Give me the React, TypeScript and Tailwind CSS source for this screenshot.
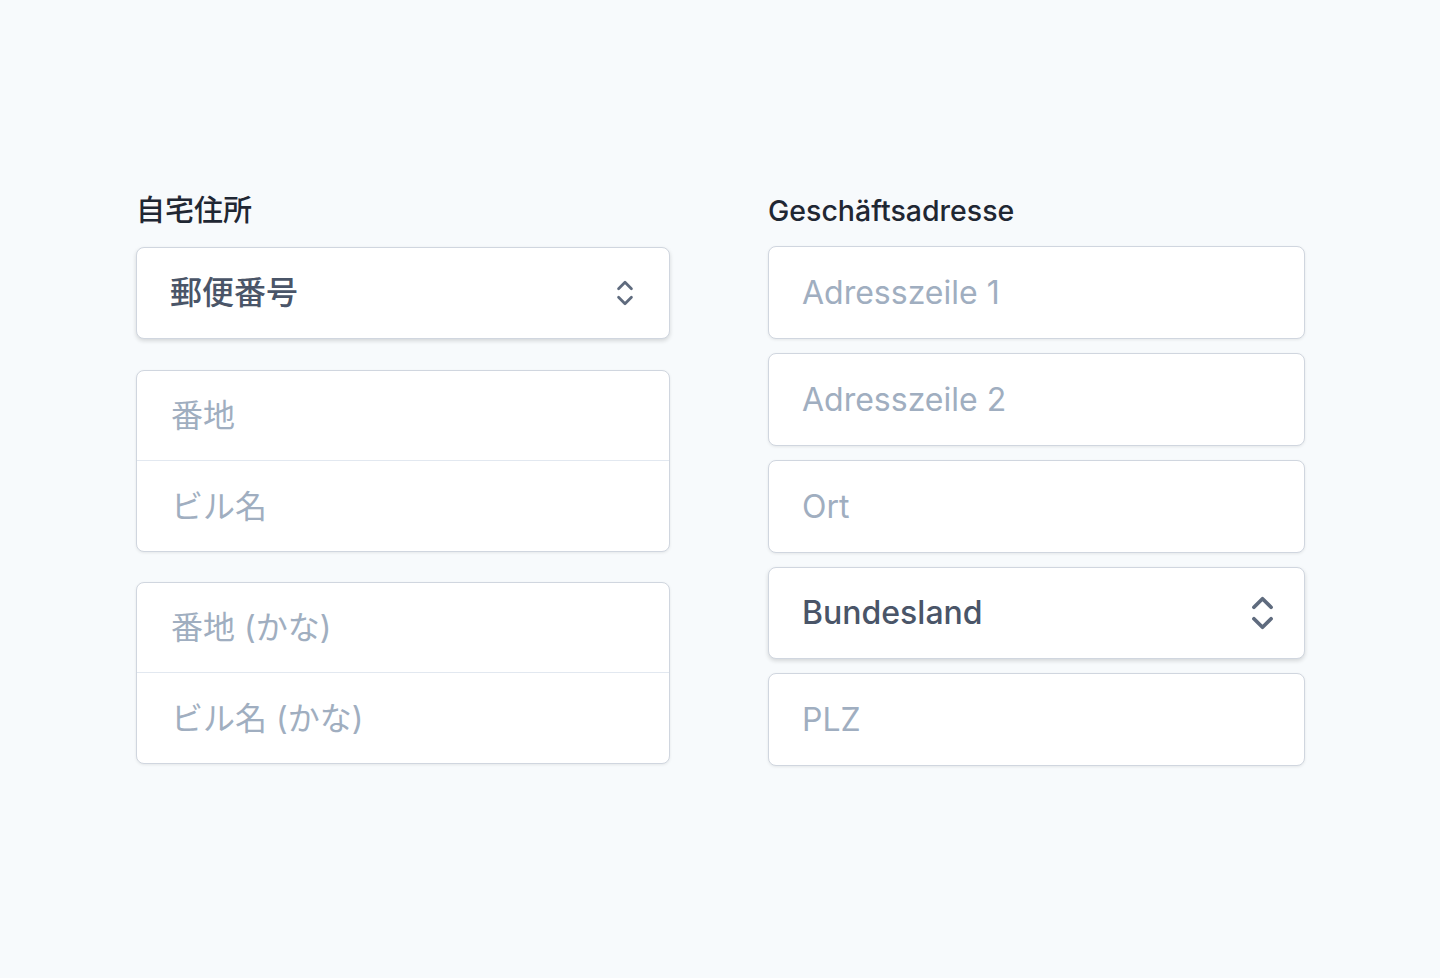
import { useState } from "react";

const font = {
  fontFamily: '"Inter", "Noto Sans CJK JP", "Noto Sans", sans-serif',
};

function Chevrons({ className }: { className: string }) {
  return (
    <svg viewBox="0 0 20 28" fill="none" className={className}>
      <path
        d="M4 10l6-6 6 6M4 18l6 6 6-6"
        stroke="currentColor"
        strokeWidth="2.6"
        strokeLinecap="round"
        strokeLinejoin="round"
      />
    </svg>
  );
}

function Field({ placeholder }: { placeholder: string }) {
  const [value, setValue] = useState("");
  return (
    <input
      value={value}
      onChange={(e) => setValue(e.target.value)}
      placeholder={placeholder}
      className="block h-[93px] w-full rounded-lg border border-[#d0d6df] bg-white px-[33px] text-[32px] text-[#2d3748] shadow-[0_1px_3px_rgba(0,0,0,0.08)] outline-none placeholder:text-[#a0aec0]"
    />
  );
}

function Select({ label, small }: { label: string; small?: boolean }) {
  return (
    <div className="flex h-[92px] w-full items-center justify-between rounded-lg border border-[#d0d6df] bg-white pl-[33px] pr-[34px] shadow-[0_2px_4px_rgba(0,0,0,0.14)]">
      <span className="text-[32px] font-medium text-[#4a5568]">{label}</span>
      <Chevrons
        className={
          small ? "mr-[-1px] h-[30px] w-[22px] text-[#5f6b7e]" : "mr-[-7px] h-[40px] w-[29px] text-[#5f6b7e]"
        }
      />
    </div>
  );
}

function Group({ top, bottom }: { top: string; bottom: string }) {
  return (
    <div className="overflow-hidden rounded-lg border border-[#d0d6df] bg-white shadow-[0_1px_3px_rgba(0,0,0,0.08)]">
      <input
        placeholder={top}
        className="block h-[89px] w-full px-[34px] text-[32px] text-[#2d3748] outline-none placeholder:text-[#a0aec0]"
      />
      <div className="h-px bg-[#e2e8f0]" />
      <input
        placeholder={bottom}
        className="block h-[90px] w-full px-[34px] text-[32px] text-[#2d3748] outline-none placeholder:text-[#a0aec0]"
      />
    </div>
  );
}

export default function App() {
  return (
    <div className="min-h-[978px] w-full bg-[#f7fafc]" style={font}>
      <div className="grid grid-cols-[534px_537px] gap-[98px] pl-[136px] pt-[192px]">
        {/* Japanese address */}
        <section>
          <h2 className="mb-[17px] text-[29px] font-medium leading-[38px] text-[#1f2733]">
            自宅住所
          </h2>
          <Select label="郵便番号" small />
          <div className="mt-[31px] flex flex-col gap-[30px]">
            <Group top="番地" bottom="ビル名" />
            <Group top="番地 (かな)" bottom="ビル名 (かな)" />
          </div>
        </section>

        {/* German address */}
        <section>
          <h2 className="mb-[16px] text-[28.5px] font-medium leading-[38px] text-[#1f2733]">
            Geschäftsadresse
          </h2>
          <div className="flex flex-col gap-[14px]">
            <Field placeholder="Adresszeile 1" />
            <Field placeholder="Adresszeile 2" />
            <Field placeholder="Ort" />
            <Select label="Bundesland" />
            <Field placeholder="PLZ" />
          </div>
        </section>
      </div>
    </div>
  );
}
